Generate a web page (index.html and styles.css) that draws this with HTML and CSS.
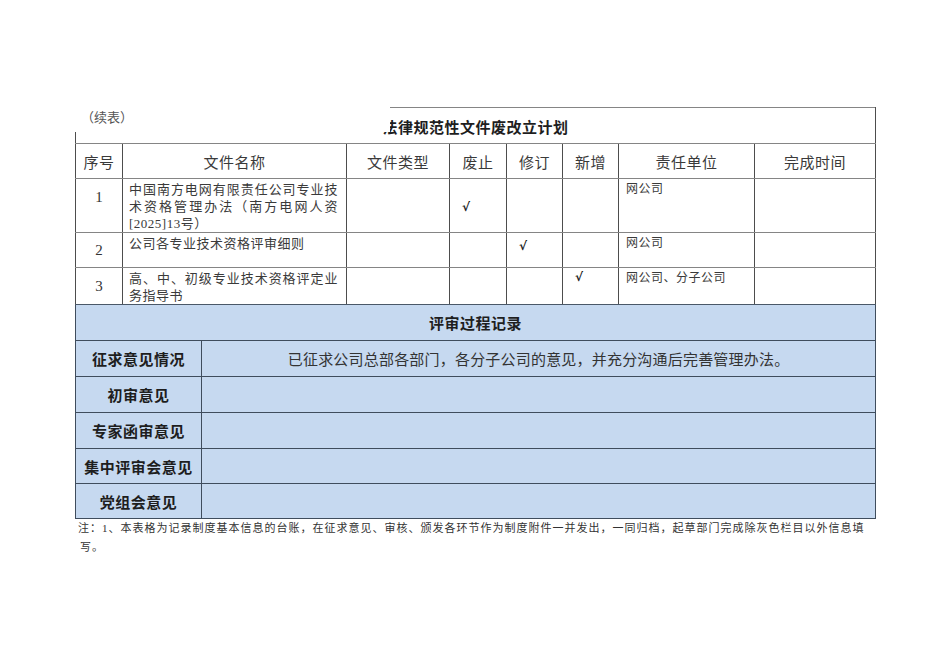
FILE: index.html
```html
<!DOCTYPE html>
<html lang="zh-CN">
<head>
<meta charset="utf-8">
<title>法律规范性文件废改立计划</title>
<link rel="stylesheet" href="styles.css">
</head>
<body>
<div class="page">
  <table class="plan">
    <colgroup>
      <col class="c-no">
      <col class="c-name-a">
      <col class="c-name-b">
      <col class="c-type">
      <col class="c-chk">
      <col class="c-chk2">
      <col class="c-chk2">
      <col class="c-unit">
      <col class="c-time">
    </colgroup>
    <tr class="r-title">
      <td class="title" colspan="9">法律规范性文件废改立计划</td>
    </tr>
    <tr class="r-head">
      <td class="head">序号</td>
      <td class="head" colspan="2">文件名称</td>
      <td class="head">文件类型</td>
      <td class="head">废止</td>
      <td class="head">修订</td>
      <td class="head">新增</td>
      <td class="head">责任单位</td>
      <td class="head">完成时间</td>
    </tr>
    <tr class="r-1">
      <td class="num num-top">1</td>
      <td class="name" colspan="2">中国南方电网有限责任公司专业技术资格管理办法（南方电网人资[2025]13号）</td>
      <td class="cell"></td>
      <td class="cell chk chk-1">√</td>
      <td class="cell"></td>
      <td class="cell"></td>
      <td class="unit">网公司</td>
      <td class="cell"></td>
    </tr>
    <tr class="r-2">
      <td class="num">2</td>
      <td class="name" colspan="2">公司各专业技术资格评审细则</td>
      <td class="cell"></td>
      <td class="cell"></td>
      <td class="cell chk chk-2">√</td>
      <td class="cell"></td>
      <td class="unit">网公司</td>
      <td class="cell"></td>
    </tr>
    <tr class="r-3">
      <td class="num last">3</td>
      <td class="name last" colspan="2">高、中、初级专业技术资格评定业务指导书</td>
      <td class="cell last"></td>
      <td class="cell last"></td>
      <td class="cell last"></td>
      <td class="cell last chk chk-3">√</td>
      <td class="unit last">网公司、分子公司</td>
      <td class="cell last"></td>
    </tr>
    <tr class="r-sec">
      <td class="sec" colspan="9">评审过程记录</td>
    </tr>
    <tr class="r-low">
      <td class="label" colspan="2">征求意见情况</td>
      <td class="content" colspan="7">已征求公司总部各部门，各分子公司的意见，并充分沟通后完善管理办法。</td>
    </tr>
    <tr class="r-low">
      <td class="label" colspan="2">初审意见</td>
      <td class="content" colspan="7"></td>
    </tr>
    <tr class="r-low">
      <td class="label" colspan="2">专家函审意见</td>
      <td class="content" colspan="7"></td>
    </tr>
    <tr class="r-low r-short">
      <td class="label" colspan="2">集中评审会意见</td>
      <td class="content" colspan="7"></td>
    </tr>
    <tr class="r-low r-short">
      <td class="label" colspan="2">党组会意见</td>
      <td class="content" colspan="7"></td>
    </tr>
  </table>
  <div class="cover">（续表）</div>
  <p class="note">注：1、本表格为记录制度基本信息的台账，在征求意见、审核、颁发各环节作为制度附件一并发出，一同归档，起草部门完成除灰色栏目以外信息填写。</p>
</div>
</body>
</html>
```

FILE: styles.css
```css
html, body {
  margin: 0;
  padding: 0;
  background: #ffffff;
}

body {
  font-family: "Liberation Serif", "Noto Sans CJK SC", serif;
  color: #333333;
}

.page {
  position: relative;
  width: 950px;
  height: 672px;
  padding: 107px 0 0 75px;
  box-sizing: border-box;
}

.plan {
  border-collapse: collapse;
  table-layout: fixed;
  width: 800px;
}

.c-no { width: 47px; }
.c-name-a { width: 79px; }
.c-name-b { width: 145px; }
.c-type { width: 103px; }
.c-chk { width: 57px; }
.c-chk2 { width: 56px; }
.c-unit { width: 136px; }
.c-time { width: 121px; }

.plan td {
  padding: 0;
  border-top: 1px solid #858585;
  border-bottom: 1px solid #858585;
  border-left: 1px solid #4d4d4d;
  border-right: 1px solid #4d4d4d;
}

.r-title { height: 36px; }
.r-head { height: 35px; }
.r-1 { height: 53px; }
.r-2 { height: 35px; }
.r-3 { height: 35px; }
.r-sec { height: 36px; }
.r-low { height: 36px; }
.r-short { height: 35px; }

.title {
  text-align: center;
  font-size: 15px;
  font-weight: bold;
  color: #1e1e1e;
  letter-spacing: 0.5px;
  padding-top: 2px !important;
}

.head {
  text-align: center;
  font-size: 15px;
  letter-spacing: 0.5px;
  color: #3a3a3a;
}

.num {
  text-align: center;
  font-size: 15px;
  color: #333333;
}

.num-top {
  vertical-align: top;
  padding-top: 10px !important;
}

.name {
  vertical-align: top;
  font-size: 13px;
  line-height: 17px;
  letter-spacing: 0.5px;
  text-align: justify;
  color: #3a3a3a;
  padding: 2px 8px 0 6px !important;
}

.unit {
  vertical-align: top;
  font-size: 12px;
  line-height: 17px;
  letter-spacing: 0.5px;
  color: #3a3a3a;
  padding: 2px 4px 0 7px !important;
}

.chk {
  font-family: "DejaVu Sans", sans-serif;
  font-size: 12px;
  font-weight: bold;
  line-height: 14px;
  color: #222222;
  vertical-align: top;
  padding-left: 12px !important;
}

.chk-1 { padding-top: 21px !important; }
.chk-2 { padding-top: 6px !important; }
.chk-3 { padding-top: 2px !important; }

.plan td.last {
  border-bottom-color: #4a5868;
}

.plan .sec,
.plan .label,
.plan .content {
  background: #c6d9f0;
  border-color: #3f4d5d;
}

.sec {
  text-align: center;
  font-size: 15px;
  font-weight: bold;
  color: #1e1e1e;
  letter-spacing: 0.5px;
}

.label {
  text-align: center;
  font-size: 15px;
  font-weight: bold;
  color: #1e1e1e;
  letter-spacing: 0.5px;
}

.content {
  text-align: center;
  font-size: 15px;
  letter-spacing: 0.2px;
  color: #333333;
}

.cover {
  position: absolute;
  left: 74px;
  top: 100px;
  width: 316px;
  height: 32px;
  background: #ffffff;
  box-sizing: border-box;
  padding: 10px 0 0 7px;
  font-size: 13px;
  line-height: 16px;
  color: #555555;
}

.note {
  margin: 0;
  width: 792px;
  padding-left: 5px;
  text-indent: -2px;
  box-sizing: border-box;
  font-size: 11px;
  line-height: 19px;
  letter-spacing: 1px;
  color: #333333;
}
```
